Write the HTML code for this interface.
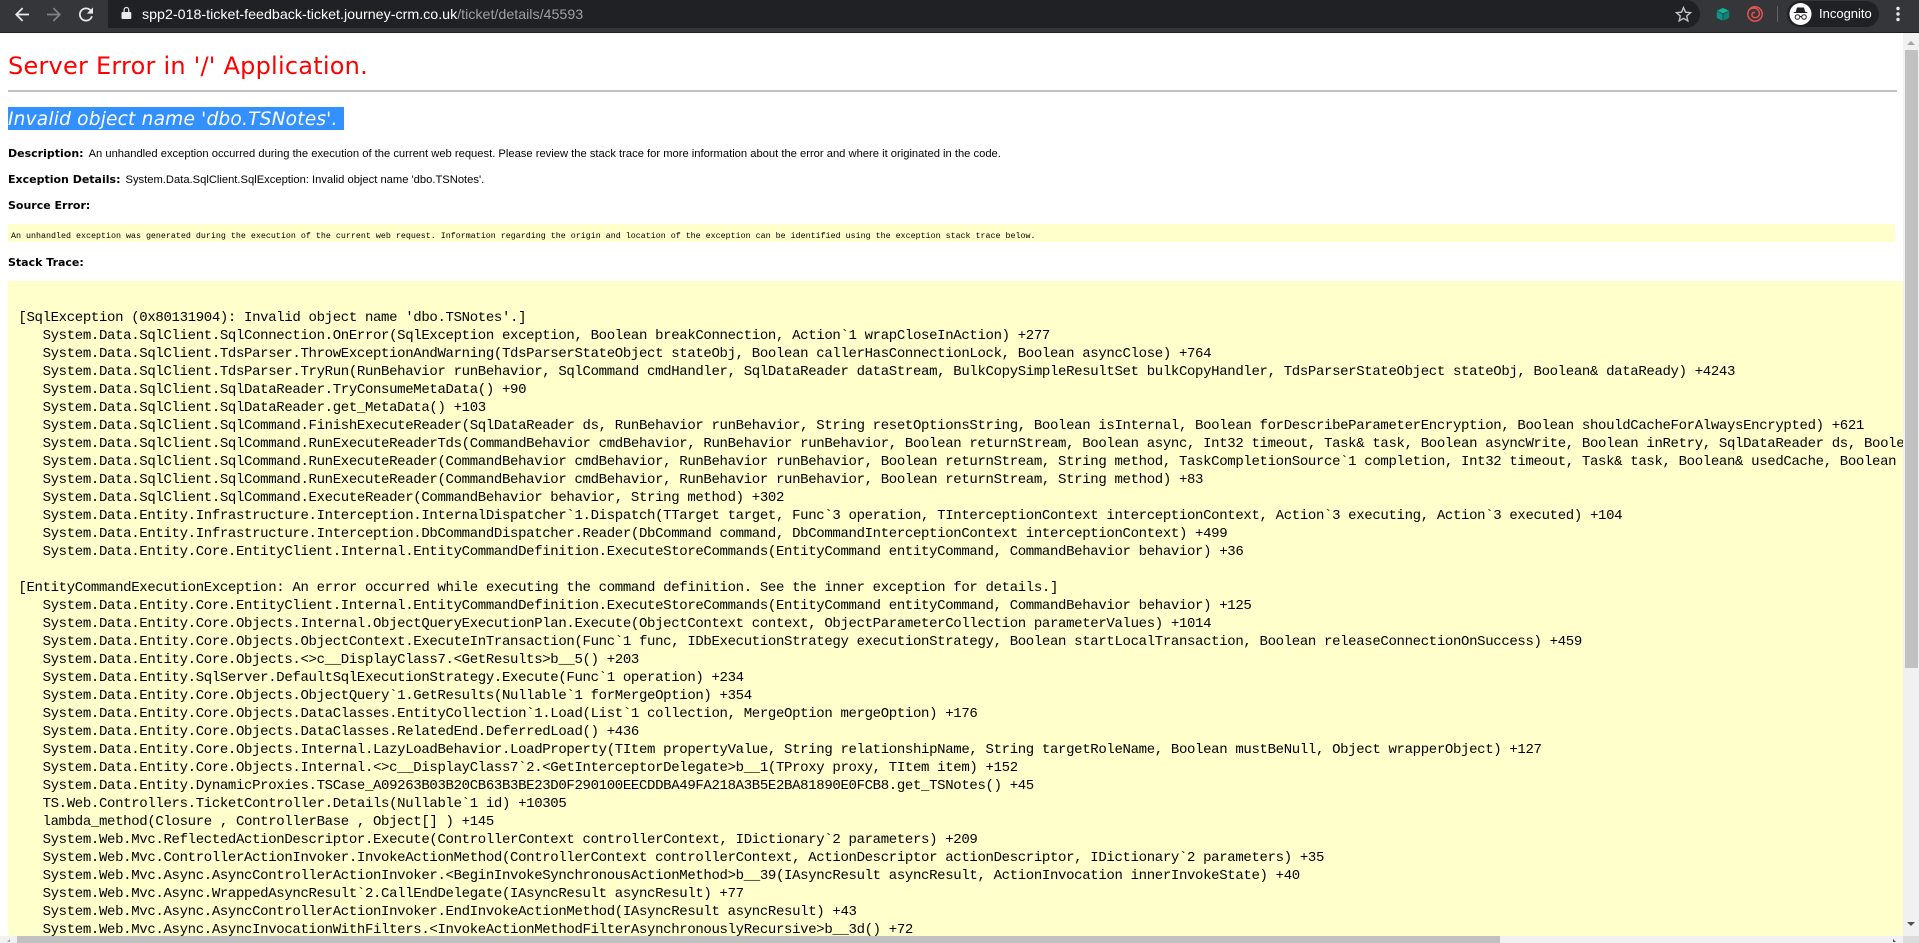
<!DOCTYPE html>
<html lang="en"><head><meta charset="utf-8"><title>Runtime Error</title>
<style>
html,body{margin:0;padding:0;width:1919px;height:943px;overflow:hidden;background:#fff}
body{position:relative;font-family:"Liberation Sans",sans-serif;color:#000}
.a{position:absolute;white-space:pre}
#bar{position:absolute;left:0;top:0;width:1919px;height:33px;background:#35363a;border-bottom:0}
#line{position:absolute;left:0;top:32px;width:1919px;height:1px;background:#1f2023}
#omni{position:absolute;left:108px;top:0;width:1592px;height:28px;background:#202124;border-radius:0 14px 14px 0}
#omni:before{content:"";position:absolute;left:0;top:0;width:14px;height:28px;background:#202124;border-radius:14px 0 0 14px;}
#url{left:142px;top:6px;font-size:14.25px;line-height:18px;color:#fff}
#url span{color:#9aa0a6}
#pill{position:absolute;left:1787px;top:1px;width:92px;height:26px;background:#202124;border-radius:13px}
#inc{left:1819px;top:5px;font-size:13px;line-height:18px;color:#fff}
h1,h2,p{margin:0;font-weight:normal}
#h1{left:8px;top:51px;font:24px/30px "DejaVu Sans",sans-serif;color:#f00;letter-spacing:.23px}
#hr{position:absolute;left:8px;top:90px;width:1889px;height:2px;background:#c0c0c0}
#sel{position:absolute;left:8px;top:107px;width:336px;height:23px;background:#3390ff}
#h2{left:8px;top:108px;font:italic 18.6px/23px "DejaVu Sans",sans-serif;color:#fff;letter-spacing:.18px}
.t{font-size:11.2px;line-height:14px}
.t b{font:bold 11px/14px "DejaVu Sans",sans-serif;padding-right:1.2px}
#box{position:absolute;left:8px;top:224px;width:1887px;height:18px;background:#ffc}
#src{left:11px;top:228px;font:8.33px/16px "Liberation Mono",monospace}
#big{position:absolute;left:8px;top:281px;width:1895px;height:655px;background:#ffc;overflow:hidden}
#pre{position:absolute;left:10.4px;top:28px;margin:0;font:14px/18px "Liberation Mono",monospace;letter-spacing:-.342px;color:#000;white-space:pre}
#vs{position:absolute;left:1903px;top:33px;width:16px;height:903px;background:#f1f1f1}
#thumb{position:absolute;left:2px;top:17px;width:13px;height:618px;background:#c1c1c1}
#hs{position:absolute;left:0;top:936px;width:1903px;height:7px;background:#f1f1f1;overflow:hidden}
#hthumb{position:absolute;left:17px;top:0;width:1483px;height:7px;background:#c1c1c1}
#corner{position:absolute;left:1903px;top:936px;width:16px;height:7px;background:#dcdcdc}
svg{position:absolute;left:0;top:0}
</style></head><body>
<div id="bar"></div><div id="omni"></div><div id="line"></div><div id="pill"></div>
<svg width="1919" height="33" viewBox="0 0 1919 33">
<g fill="#e8eaed">
<path transform="translate(11.5 4) scale(.875)" d="M20 11H7.83l5.59-5.59L12 4l-8 8 8 8 1.41-1.41L7.83 13H20v-2z"/>
<path transform="translate(43.5 4) scale(.875)" fill="#7f8184" d="M12 4l-1.41 1.41L16.17 11H4v2h12.17l-5.58 5.59L12 20l8-8z"/>
<path transform="translate(75.5 4) scale(.875)" d="M17.65 6.35A7.958 7.958 0 0 0 12 4c-4.42 0-7.99 3.58-7.99 8s3.57 8 7.99 8c3.73 0 6.84-2.55 7.73-6h-2.08A5.99 5.99 0 0 1 12 18c-3.31 0-6-2.69-6-6s2.69-6 6-6c1.66 0 3.14.69 4.22 1.78L13 11h7V4l-2.35 2.35z"/>
<path d="M122.5 13h1v-2.2a2.9 2.9 0 0 1 5.8 0V13h1a1 1 0 0 1 1 1v5a1 1 0 0 1-1 1h-7.800a1 1 0 0 1-1-1v-5a1 1 0 0 1 1-1zm2.200 0h3.400v-2.200a1.700 1.700 0 0 0-3.400 0z" transform="translate(0 -1)"/>
<path transform="translate(1673 4) scale(.875)" fill="#bdc1c6" d="M22 9.24l-7.19-.62L12 2 9.19 8.63 2 9.24l5.46 4.73L5.82 21 12 17.27 18.18 21l-1.630-7.030L22 9.240zM12 15.400l-3.760 2.270 1-4.280-3.320-2.880 4.380-.380L12 6.100l1.710 4.040 4.380.380-3.320 2.880 1 4.280L12 15.400z"/>
</g>
<path d="M1723 8l-6 2.600 6 2.800 6-2.800z" fill="#17b19d"/><path d="M1716.800 11.300l5.700 2.700v6.600l-5-2.300a1 1 0 0 1-.7-1z" fill="#0d9488"/><path d="M1729.200 11.300l-5.700 2.700v6.600l5-2.300a1 1 0 0 0 .7-1z" fill="#0b8578"/>
<g fill="none" stroke="#e9524f" stroke-width="1.500"><circle cx="1755" cy="14" r="7.200"/><path d="M1749 10c2.500-2.500 7-2.500 9 0s2 5.500-.5 7-5 .5-5.500-1.500 1-3.500 3-3"/></g>
<rect x="1777" y="6" width="1" height="16" fill="#5f6368"/>
<circle cx="1800.500" cy="14" r="11" fill="#fff"/>
<path d="M1797 7.500h7l1.300 4.500h2v1h-13.600v-1h2z" fill="#202124"/>
<g fill="none" stroke="#202124" stroke-width="1"><circle cx="1797.500" cy="17" r="2.300"/><circle cx="1804" cy="17" r="2.300"/><path d="M1799.800 16.500h1.900"/></g>
<circle cx="1898" cy="8.500" r="1.700" fill="#e8eaed"/><circle cx="1898" cy="14" r="1.700" fill="#e8eaed"/><circle cx="1898" cy="19.500" r="1.700" fill="#e8eaed"/>
</svg>
<div id="url" class="a">spp2-018-ticket-feedback-ticket.journey-crm.co.uk<span>/ticket/details/45593</span></div>
<div id="inc" class="a">Incognito</div>

<h1 id="h1" class="a">Server Error in '/' Application.</h1>
<div id="hr"></div>
<div id="sel"></div>
<h2 id="h2" class="a">Invalid object name 'dbo.TSNotes'.</h2>
<p class="a t" style="left:8px;top:147px"><b>Description: </b>An unhandled exception occurred during the execution of the current web request. Please review the stack trace for more information about the error and where it originated in the code.</p>
<p class="a t" style="left:8px;top:173px"><b>Exception Details: </b>System.Data.SqlClient.SqlException: Invalid object name 'dbo.TSNotes'.</p>
<p class="a t" style="left:8px;top:199px"><b>Source Error:</b></p>
<div id="box"></div>
<div id="src" class="a">An unhandled exception was generated during the execution of the current web request. Information regarding the origin and location of the exception can be identified using the exception stack trace below.</div>
<p class="a t" style="left:8px;top:256px"><b>Stack Trace:</b></p>
<div id="big"><pre id="pre">[SqlException (0x80131904): Invalid object name 'dbo.TSNotes'.]
   System.Data.SqlClient.SqlConnection.OnError(SqlException exception, Boolean breakConnection, Action`1 wrapCloseInAction) +277
   System.Data.SqlClient.TdsParser.ThrowExceptionAndWarning(TdsParserStateObject stateObj, Boolean callerHasConnectionLock, Boolean asyncClose) +764
   System.Data.SqlClient.TdsParser.TryRun(RunBehavior runBehavior, SqlCommand cmdHandler, SqlDataReader dataStream, BulkCopySimpleResultSet bulkCopyHandler, TdsParserStateObject stateObj, Boolean&amp; dataReady) +4243
   System.Data.SqlClient.SqlDataReader.TryConsumeMetaData() +90
   System.Data.SqlClient.SqlDataReader.get_MetaData() +103
   System.Data.SqlClient.SqlCommand.FinishExecuteReader(SqlDataReader ds, RunBehavior runBehavior, String resetOptionsString, Boolean isInternal, Boolean forDescribeParameterEncryption, Boolean shouldCacheForAlwaysEncrypted) +621
   System.Data.SqlClient.SqlCommand.RunExecuteReaderTds(CommandBehavior cmdBehavior, RunBehavior runBehavior, Boolean returnStream, Boolean async, Int32 timeout, Task&amp; task, Boolean asyncWrite, Boolean inRetry, SqlDataReader ds, Boolean describeParameterEncryptionRequest) +1421
   System.Data.SqlClient.SqlCommand.RunExecuteReader(CommandBehavior cmdBehavior, RunBehavior runBehavior, Boolean returnStream, String method, TaskCompletionSource`1 completion, Int32 timeout, Task&amp; task, Boolean&amp; usedCache, Boolean asyncWrite, Boolean inRetry) +177
   System.Data.SqlClient.SqlCommand.RunExecuteReader(CommandBehavior cmdBehavior, RunBehavior runBehavior, Boolean returnStream, String method) +83
   System.Data.SqlClient.SqlCommand.ExecuteReader(CommandBehavior behavior, String method) +302
   System.Data.Entity.Infrastructure.Interception.InternalDispatcher`1.Dispatch(TTarget target, Func`3 operation, TInterceptionContext interceptionContext, Action`3 executing, Action`3 executed) +104
   System.Data.Entity.Infrastructure.Interception.DbCommandDispatcher.Reader(DbCommand command, DbCommandInterceptionContext interceptionContext) +499
   System.Data.Entity.Core.EntityClient.Internal.EntityCommandDefinition.ExecuteStoreCommands(EntityCommand entityCommand, CommandBehavior behavior) +36

[EntityCommandExecutionException: An error occurred while executing the command definition. See the inner exception for details.]
   System.Data.Entity.Core.EntityClient.Internal.EntityCommandDefinition.ExecuteStoreCommands(EntityCommand entityCommand, CommandBehavior behavior) +125
   System.Data.Entity.Core.Objects.Internal.ObjectQueryExecutionPlan.Execute(ObjectContext context, ObjectParameterCollection parameterValues) +1014
   System.Data.Entity.Core.Objects.ObjectContext.ExecuteInTransaction(Func`1 func, IDbExecutionStrategy executionStrategy, Boolean startLocalTransaction, Boolean releaseConnectionOnSuccess) +459
   System.Data.Entity.Core.Objects.&lt;&gt;c__DisplayClass7.&lt;GetResults&gt;b__5() +203
   System.Data.Entity.SqlServer.DefaultSqlExecutionStrategy.Execute(Func`1 operation) +234
   System.Data.Entity.Core.Objects.ObjectQuery`1.GetResults(Nullable`1 forMergeOption) +354
   System.Data.Entity.Core.Objects.DataClasses.EntityCollection`1.Load(List`1 collection, MergeOption mergeOption) +176
   System.Data.Entity.Core.Objects.DataClasses.RelatedEnd.DeferredLoad() +436
   System.Data.Entity.Core.Objects.Internal.LazyLoadBehavior.LoadProperty(TItem propertyValue, String relationshipName, String targetRoleName, Boolean mustBeNull, Object wrapperObject) +127
   System.Data.Entity.Core.Objects.Internal.&lt;&gt;c__DisplayClass7`2.&lt;GetInterceptorDelegate&gt;b__1(TProxy proxy, TItem item) +152
   System.Data.Entity.DynamicProxies.TSCase_A09263B03B20CB63B3BE23D0F290100EECDDBA49FA218A3B5E2BA81890E0FCB8.get_TSNotes() +45
   TS.Web.Controllers.TicketController.Details(Nullable`1 id) +10305
   lambda_method(Closure , ControllerBase , Object[] ) +145
   System.Web.Mvc.ReflectedActionDescriptor.Execute(ControllerContext controllerContext, IDictionary`2 parameters) +209
   System.Web.Mvc.ControllerActionInvoker.InvokeActionMethod(ControllerContext controllerContext, ActionDescriptor actionDescriptor, IDictionary`2 parameters) +35
   System.Web.Mvc.Async.AsyncControllerActionInvoker.&lt;BeginInvokeSynchronousActionMethod&gt;b__39(IAsyncResult asyncResult, ActionInvocation innerInvokeState) +40
   System.Web.Mvc.Async.WrappedAsyncResult`2.CallEndDelegate(IAsyncResult asyncResult) +77
   System.Web.Mvc.Async.AsyncControllerActionInvoker.EndInvokeActionMethod(IAsyncResult asyncResult) +43
   System.Web.Mvc.Async.AsyncInvocationWithFilters.&lt;InvokeActionMethodFilterAsynchronouslyRecursive&gt;b__3d() +72</pre></div>
<div id="vs"><div id="thumb"></div>
<svg width="16" height="903" viewBox="0 0 16 903"><path d="M4 12l4-4 4 4z" fill="#a3a3a3"/><path d="M4 889h8l-4 4z" fill="#505050"/></svg></div>
<div id="hs"><div id="hthumb"></div>
<svg width="1903" height="7" viewBox="0 0 1903 7"><path d="M10 3l-3 3h3z" fill="#a3a3a3"/><path d="M1893 3l3 3h-3z" fill="#505050"/></svg></div>
<div id="corner"></div>
</body></html>
